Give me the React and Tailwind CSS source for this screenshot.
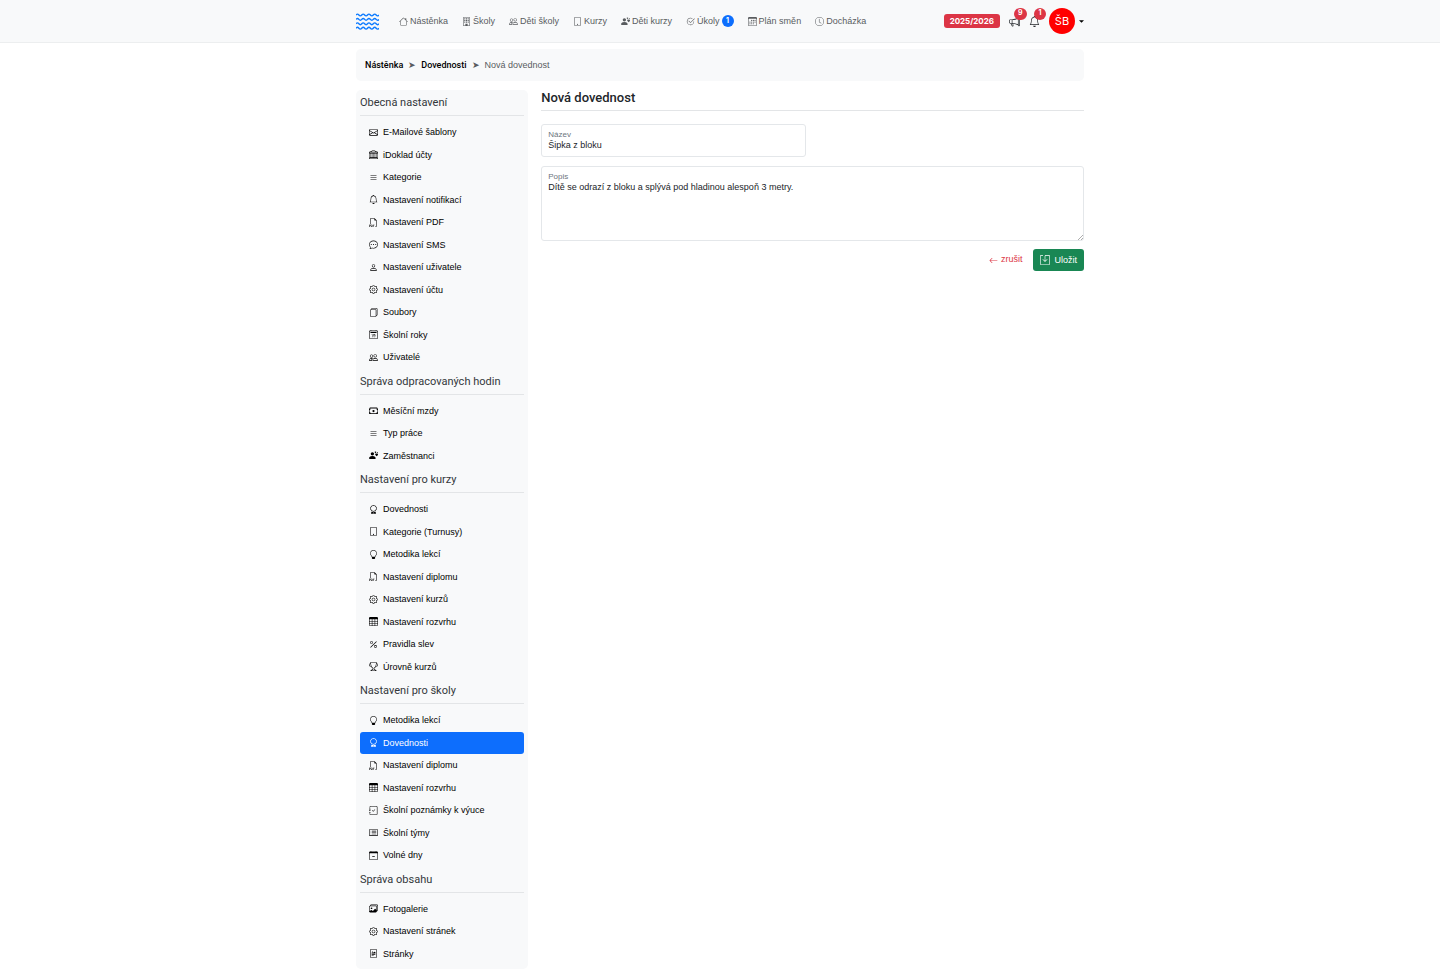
import {
  BsArrowLeft,
  BsAward,
  BsBank,
  BsBell,
  BsBuilding,
  BsCalendar2Date,
  BsCalendar3,
  BsCalendarMinus,
  BsCardList,
  BsCashStack,
  BsChatDots,
  BsCheck2Circle,
  BsClock,
  BsEnvelope,
  BsFileRichtext,
  BsFiles,
  BsFiletypePdf,
  BsGear,
  BsHouse,
  BsImages,
  BsJournalCheck,
  BsLightbulb,
  BsList,
  BsMegaphone,
  BsPeople,
  BsPercent,
  BsPerson,
  BsPersonHearts,
  BsSave,
  BsTable,
  BsTablet,
  BsTrophy,
} from "react-icons/bs";

const navItems = [
  { label: "Nástěnka", icon: BsHouse },
  { label: "Školy", icon: BsBuilding },
  { label: "Děti školy", icon: BsPeople },
  { label: "Kurzy", icon: BsTablet },
  { label: "Děti kurzy", icon: BsPersonHearts },
  { label: "Úkoly", icon: BsCheck2Circle, badge: 1 },
  { label: "Plán směn", icon: BsCalendar3 },
  { label: "Docházka", icon: BsClock },
];

const sections = [
  {
    title: "Obecná nastavení",
    items: [
      { label: "E-Mailové šablony", icon: BsEnvelope },
      { label: "iDoklad účty", icon: BsBank },
      { label: "Kategorie", icon: BsList },
      { label: "Nastavení notifikací", icon: BsBell },
      { label: "Nastavení PDF", icon: BsFiletypePdf },
      { label: "Nastavení SMS", icon: BsChatDots },
      { label: "Nastavení uživatele", icon: BsPerson },
      { label: "Nastavení účtu", icon: BsGear },
      { label: "Soubory", icon: BsFiles },
      { label: "Školní roky", icon: BsCalendar2Date },
      { label: "Uživatelé", icon: BsPeople },
    ],
  },
  {
    title: "Správa odpracovaných hodin",
    items: [
      { label: "Měsíční mzdy", icon: BsCashStack },
      { label: "Typ práce", icon: BsList },
      { label: "Zaměstnanci", icon: BsPersonHearts },
    ],
  },
  {
    title: "Nastavení pro kurzy",
    items: [
      { label: "Dovednosti", icon: BsAward },
      { label: "Kategorie (Turnusy)", icon: BsTablet },
      { label: "Metodika lekcí", icon: BsLightbulb },
      { label: "Nastavení diplomu", icon: BsFiletypePdf },
      { label: "Nastavení kurzů", icon: BsGear },
      { label: "Nastavení rozvrhu", icon: BsTable },
      { label: "Pravidla slev", icon: BsPercent },
      { label: "Úrovně kurzů", icon: BsTrophy },
    ],
  },
  {
    title: "Nastavení pro školy",
    items: [
      { label: "Metodika lekcí", icon: BsLightbulb },
      { label: "Dovednosti", icon: BsAward, active: true },
      { label: "Nastavení diplomu", icon: BsFiletypePdf },
      { label: "Nastavení rozvrhu", icon: BsTable },
      { label: "Školní poznámky k výuce", icon: BsJournalCheck },
      { label: "Školní týmy", icon: BsCardList },
      { label: "Volné dny", icon: BsCalendarMinus },
    ],
  },
  {
    title: "Správa obsahu",
    items: [
      { label: "Fotogalerie", icon: BsImages },
      { label: "Nastavení stránek", icon: BsGear },
      { label: "Stránky", icon: BsFileRichtext },
    ],
  },
];

function Logo() {
  const wave = "q1.44 -1.8 2.88 0 t2.88 0";
  const line = `${wave} ${wave} ${wave} ${wave}`;
  return (
    <svg width="23" height="18" viewBox="0 0 23 18" fill="none" stroke="#0d7bff" strokeWidth="1.4">
      <path d={`M0 3 ${line}`} />
      <path d={`M0 7.4 ${line}`} />
      <path d={`M0 11.8 ${line}`} />
      <path d={`M0 16.2 ${line}`} />
    </svg>
  );
}

function Notification({ icon: Icon, label, count }) {
  return (
    <button type="button" aria-label={label} className="relative text-[#212529]">
      <Icon className="size-[11px]" />
      <span className="absolute -top-2 left-[5px] flex h-3 min-w-3 items-center justify-center rounded-full bg-[#dc3545] px-1 font-['Inter'] text-[7px] font-bold text-white">
        {count}
      </span>
    </button>
  );
}

function Navbar() {
  return (
    <header className="border-b border-[#eceeef] bg-[#f8f9fa]">
      <div className="mx-auto flex h-[42px] max-w-[742px] items-center px-[7px]">
        <a href="#" aria-label="Domů" className="mr-5">
          <Logo />
        </a>
        <nav className="flex flex-1 gap-[14px] text-[#595c5f]">
          {navItems.map(({ label, icon: Icon, badge }) => (
            <a key={label} href="#" className="flex items-center gap-[2px] whitespace-nowrap">
              <Icon className="size-[9px]" />
              <span className="pt-px">{label}</span>
              {badge && (
                <span className="flex h-3 min-w-3 items-center justify-center rounded-full bg-[#0d6efd] px-1 font-['Inter'] text-[7px] font-bold text-white">
                  {badge}
                </span>
              )}
            </a>
          ))}
        </nav>
        <div className="flex items-center gap-[9px]">
          <span className="flex h-[14px] items-center rounded-[3px] bg-[#dc3545] px-[6px] font-['Inter'] text-[8px] font-bold text-white">
            2025/2026
          </span>
          <Notification icon={BsMegaphone} label="Oznámení" count={9} />
          <Notification icon={BsBell} label="Upozornění" count={1} />
          <button type="button" aria-label="Uživatel" className="flex items-center gap-1">
            <span className="flex size-[26px] items-center justify-center rounded-full bg-[#ff0000] font-['Inter'] text-[11px] text-white">
              ŠB
            </span>
            <svg width="5" height="3" viewBox="0 0 6 3" fill="#000">
              <path d="M0 0h6L3 3z" />
            </svg>
          </button>
        </div>
      </div>
    </header>
  );
}

function Breadcrumb() {
  return (
    <nav
      aria-label="breadcrumb"
      className="mb-[9px] flex h-8 items-center gap-[5px] rounded-[5px] bg-[#f8f9fa] px-[9px] pt-px text-[#595c5f]"
    >
      <a href="#" className="font-['Roboto'] font-medium text-black">
        Nástěnka
      </a>
      <span>➤</span>
      <a href="#" className="font-['Roboto'] font-medium text-black">
        Dovednosti
      </a>
      <span>➤</span>
      <span>Nová dovednost</span>
    </nav>
  );
}

function Sidebar() {
  return (
    <aside className="rounded-[5px] bg-[#f8f9fa] px-1 pb-1">
      {sections.map((section) => (
        <section key={section.title}>
          <h2 className="mb-[5px] flex h-[26px] items-center border-b border-[#e3e5e7] pt-[2px] font-['Roboto'] text-[11px] text-[#33373b]">
            {section.title}
          </h2>
          <ul>
            {section.items.map(({ label, icon: Icon, active }) => (
              <li key={label}>
                <a
                  href="#"
                  className={
                    active
                      ? "flex items-center gap-[5px] rounded-[3px] bg-[#0d6efd] py-1 pl-[9px] text-white"
                      : "flex items-center gap-[5px] py-1 pl-[9px] text-black"
                  }
                >
                  <Icon className="size-[9px]" />
                  <span className="pt-px">{label}</span>
                </a>
              </li>
            ))}
          </ul>
        </section>
      ))}
    </aside>
  );
}

function SkillForm() {
  return (
    <form>
      <h1 className="mb-[13px] border-b border-[#e3e5e7] pb-1 font-['Roboto'] text-[13px] leading-4 font-medium">
        Nová dovednost
      </h1>
      <div className="mb-[9px] grid grid-cols-2 gap-[13px]">
        <div className="relative">
          <label htmlFor="name" className="absolute top-[6px] left-[7px] text-[8px] leading-[10px] text-[#6c757d]">
            Název
          </label>
          <input
            id="name"
            type="text"
            defaultValue="Šipka z bloku"
            className="h-[33px] w-full rounded-[3px] border border-[#e4e7ea] px-[6px] pt-[9px]"
          />
        </div>
      </div>
      <div className="relative">
        <label htmlFor="description" className="absolute top-[6px] left-[7px] text-[8px] leading-[10px] text-[#6c757d]">
          Popis
        </label>
        <textarea
          id="description"
          defaultValue="Dítě se odrazí z bloku a splývá pod hladinou alespoň 3 metry."
          className="block h-[75px] w-full rounded-[3px] border border-[#e4e7ea] px-[6px] pt-[14px] [&::-webkit-resizer]:appearance-none"
        />
        <svg
          className="pointer-events-none absolute right-px bottom-px"
          width="5"
          height="5"
          viewBox="0 0 5 5"
          stroke="#8a8a8a"
          strokeWidth="0.7"
        >
          <path d="M0 5 5 0M3 5 5 3" />
        </svg>
      </div>
      <div className="mt-2 flex items-center justify-end gap-[11px]">
        <a href="#" className="flex items-center gap-[3px] text-[#dc3545]">
          <BsArrowLeft className="size-[9px]" />
          zrušit
        </a>
        <button
          type="submit"
          className="flex h-[22px] items-center gap-1 rounded-[3px] bg-[#198754] px-[7px] text-white"
        >
          <BsSave className="size-[10px]" />
          <span className="pt-px">Uložit</span>
        </button>
      </div>
    </form>
  );
}

export default function App() {
  return (
    <div className="min-h-screen bg-white font-['Liberation_Sans',Arial,sans-serif] text-[9px] leading-normal text-[#212529]">
      <Navbar />
      <main className="mx-auto max-w-[742px] px-[7px] pt-[6px] pb-[9px]">
        <Breadcrumb />
        <div className="grid grid-cols-4 gap-[13px]">
          <Sidebar />
          <div className="col-span-3">
            <SkillForm />
          </div>
        </div>
      </main>
    </div>
  );
}
